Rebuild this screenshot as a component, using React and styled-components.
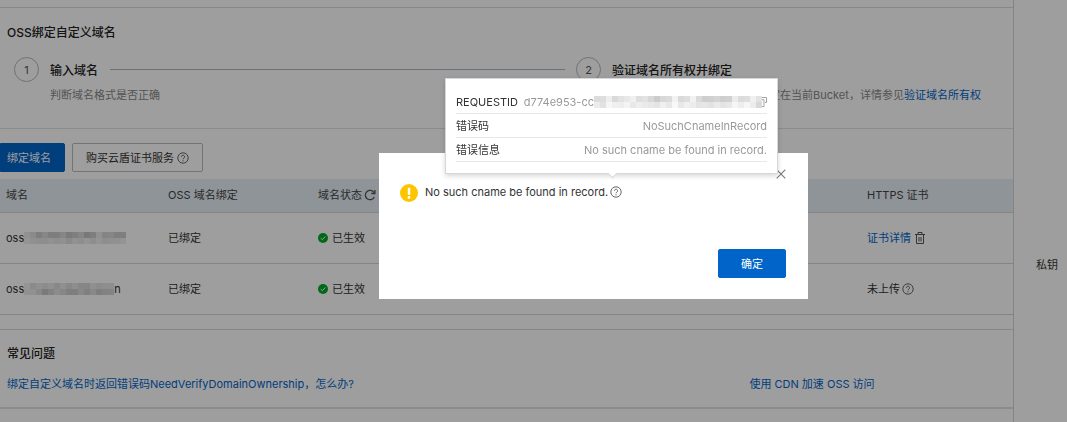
import styled, { createGlobalStyle } from "styled-components";

const GlobalStyle = createGlobalStyle`
  * {
    box-sizing: border-box;
  }

  body {
    margin: 0;
    background-color: #fff;
    color: #333;
    font-family: Inter, "Noto Sans CJK SC", sans-serif;
    font-size: 11px;
    line-height: 16px;
  }

  button {
    font: inherit;
    cursor: pointer;
  }

  a {
    color: #0064c8;
    text-decoration: none;
  }

  svg {
    display: block;
    flex: none;
  }
`;

const Page = styled.div`
  display: flex;
  min-height: 100vh;
`;

const Main = styled.main`
  flex: 1;
  min-width: 0;
  padding-top: 7px;
  border-right: 1px solid #d2d5d8;
`;

const Aside = styled.aside`
  width: 53px;
  padding: 257px 0 0 22px;
  white-space: nowrap;
`;

const Section = styled.section`
  border-top: 1px solid #d8dadc;
  border-bottom: ${({ $thick }) => ($thick ? "2px" : "1px")} solid #dfe1e3;

  h2 {
    margin: 0;
    font-size: 12px;
    line-height: 20px;
    font-weight: 500;
    color: #222;
  }
`;

const BindSection = styled(Section)`
  height: 122px;
  padding: 15px 0 0 7px;
`;

const Steps = styled.ol`
  display: grid;
  grid-template-columns: 562fr 437fr;
  margin: 14px 0 0;
  padding: 0 0 0 7px;
  list-style: none;
`;

const Step = styled.li`
  display: flex;
  gap: 11px;
  min-width: 0;
`;

const StepNumber = styled.span`
  flex: none;
  display: flex;
  align-items: center;
  justify-content: center;
  width: 25px;
  height: 25px;
  border: 1px solid #b4b9be;
  border-radius: 50%;
  color: #555;
`;

const StepBody = styled.div`
  flex: 1;
  min-width: 0;
  padding-top: 4px;
  white-space: nowrap;

  p {
    margin: 6px 0 0;
    color: #888;
  }
`;

const StepTitle = styled.div`
  display: flex;
  align-items: center;
  gap: 12px;
  height: 20px;
  font-size: 12px;
  font-weight: 500;
  color: #222;

  &::after {
    content: "";
    display: ${({ $last }) => ($last ? "none" : "block")};
    flex: 1;
    height: 1px;
    margin: 0 11px 4px 0;
    background-color: #aab6c4;
  }
`;

const Toolbar = styled.div`
  display: flex;
  gap: 7px;
  padding: 14px 0 7px;
`;

const Button = styled.button`
  display: flex;
  align-items: center;
  justify-content: center;
  gap: 3px;
  height: 29px;
  padding: 0 13px;
  border: 1px solid ${({ $primary }) => ($primary ? "#0064c8" : "#b8bcc0")};
  border-radius: 2px;
  background-color: ${({ $primary }) => ($primary ? "#0064c8" : "#fff")};
  color: ${({ $primary }) => ($primary ? "#fff" : "#333")};
  white-space: nowrap;
`;

const BindButton = styled(Button)`
  padding-left: 6px;
  border-radius: 0 2px 2px 0;
`;

const ConfirmButton = styled(Button)`
  width: 68px;
`;

const Table = styled.table`
  width: 100%;
  table-layout: fixed;
  border-collapse: collapse;

  th,
  td {
    padding: 0 0 0 6px;
    border-bottom: 1px solid #d2d5d8;
    text-align: left;
    font-weight: 400;
    white-space: nowrap;
  }

  th {
    height: 33px;
    background-color: #e6eff5;
    color: #444;
  }

  td {
    height: 51px;
  }
`;

const Col = styled.col`
  width: ${({ $width }) => $width};
`;

const Inline = styled.span`
  display: flex;
  align-items: center;
  gap: ${({ $gap }) => $gap || "4px"};
`;

const IconButton = styled.button`
  display: inline-flex;
  padding: 0;
  border: 0;
  background: none;
  color: #555;
`;

const MaskGrid = styled.span`
  display: inline-grid;
  grid-template-rows: 6px 6px;
  grid-auto-flow: column;
  grid-auto-columns: 6px;
`;

const MaskCell = styled.i`
  background-color: rgb(${({ $tone }) => `${$tone}, ${$tone}, ${$tone}`});
`;

const Faq = styled(Section)`
  height: 80px;
  margin-top: 14px;
  padding: 14px 0 0 7px;
`;

const FaqLinks = styled.div`
  display: grid;
  grid-template-columns: 738fr 262fr;
  margin-top: 12px;
  white-space: nowrap;
`;

const Overlay = styled.div`
  position: fixed;
  inset: 0;
  display: flex;
  justify-content: center;
  align-items: flex-start;
  padding: 153px 0 0 120px;
  background-color: rgba(0, 0, 0, 0.38);
`;

const Dialog = styled.div`
  position: relative;
  display: flex;
  flex-direction: column;
  width: 429px;
  min-height: 146px;
  padding: 31px 22px 21px 21px;
  background-color: #fff;
`;

const DialogMessage = styled.div`
  display: flex;
  align-items: flex-start;
  gap: 7px;
  flex: 1;
`;

const CloseButton = styled(IconButton)`
  position: absolute;
  top: 16px;
  right: 22px;
  color: #777;
`;

const DialogFooter = styled.div`
  display: flex;
  justify-content: flex-end;
`;

const Popover = styled.div`
  position: absolute;
  z-index: 1;
  bottom: calc(100% - 21px);
  left: 66px;
  width: 333px;
  padding: 11px 10px;
  border: 1px solid #d3d7de;
  background-color: #fff;
  box-shadow: 0 2px 5px rgba(0, 0, 0, 0.16);

  &::after {
    content: "";
    position: absolute;
    bottom: -4px;
    left: 50%;
    width: 6px;
    height: 6px;
    margin-left: -3px;
    border: solid #d3d7de;
    border-width: 0 1px 1px 0;
    background-color: #fff;
    transform: rotate(45deg);
  }
`;

const Details = styled.dl`
  margin: 0;
`;

const DetailRow = styled.div`
  display: flex;
  align-items: center;
  justify-content: space-between;
  height: 24px;
  border-bottom: 1px solid #e8e8e8;
  white-space: nowrap;

  dd {
    display: flex;
    align-items: center;
    margin: 0;
    color: #999;
  }
`;

const DOMAIN_MASK_1 = [
  [146, 148], [138, 146], [126, 142], [134, 142], [126, 146], [126, 142],
  [134, 146], [122, 138], [128, 146], [134, 142], [120, 148], [126, 142],
  [146, 148], [132, 142], [134, 144], [128, 146], [128, 148],
];

const DOMAIN_MASK_2 = [
  [148, 146], [138, 146], [144, 136], [140, 122], [144, 130], [136, 140],
  [144, 134], [136, 126], [142, 126], [134, 136], [134, 128], [144, 136],
  [140, 126], [142, 130], [142, 132],
];

const REQUEST_MASK = [
  [220, 236], [222, 226], [238, 246], [218, 240], [226, 238], [232, 244],
  [240, 232], [222, 238], [226, 234], [216, 232], [204, 228], [216, 240],
  [220, 232], [242, 248], [218, 232], [222, 240], [242, 236], [218, 228],
  [206, 230], [208, 226], [212, 234], [206, 228], [208, 232], [236, 246],
  [220, 238], [222, 246], [240, 236], [226, 216],
];

// the mask is drawn over a lighter page when it sits below the overlay
const Mask = ({ cells, dimmed }) => (
  <MaskGrid aria-hidden="true">
    {cells.flat().map((tone, i) => (
      <MaskCell key={i} $tone={dimmed ? Math.round(tone / 0.62) : tone} />
    ))}
  </MaskGrid>
);

const HelpIcon = () => (
  <svg width="12" height="12" viewBox="0 0 12 12" fill="none" stroke="#555">
    <circle cx="6" cy="6" r="5.2" strokeWidth="0.9" />
    <path d="M4.4 4.8a1.6 1.6 0 1 1 2.5 1.3c-.6.4-.9.6-.9 1.2" strokeWidth="0.9" />
    <circle cx="6" cy="8.8" r="0.6" fill="#555" stroke="none" />
  </svg>
);

const RefreshIcon = () => (
  <svg width="12" height="12" viewBox="0 0 12 12" fill="none" stroke="currentColor" strokeWidth="1.3">
    <path d="M10.3 8a4.7 4.7 0 1 1-.1-4.2" />
    <path d="M10.9.9v3.6H7.3" />
  </svg>
);

const CheckIcon = () => (
  <svg width="10" height="10" viewBox="0 0 10 10" fill="none">
    <circle cx="5" cy="5" r="5" fill="#00a825" />
    <path d="M2.7 5.1l1.6 1.6 3-3.2" stroke="#fff" />
  </svg>
);

const TrashIcon = () => (
  <svg width="10" height="12" viewBox="0 0 10 12" fill="none" stroke="currentColor">
    <path d="M0 2.5h10M3 2.3V.5h4v1.8M1.5 2.5v9h7v-9M4 5v4.5M6 5v4.5" />
  </svg>
);

const WarningIcon = () => (
  <svg width="18" height="18" viewBox="0 0 18 18">
    <circle cx="9" cy="9" r="9" fill="#fdc500" />
    <rect x="7.8" y="3.8" width="2.5" height="7.2" rx="1" fill="#fff" />
    <circle cx="9" cy="13.5" r="1.4" fill="#fff" />
  </svg>
);

const CloseIcon = () => (
  <svg width="10" height="10" viewBox="0 0 10 10" stroke="currentColor" strokeWidth="1.1">
    <path d="M.7.7l8.6 8.6M9.3.7L.7 9.3" />
  </svg>
);

const CopyIcon = () => (
  <svg width="5" height="10" viewBox="0 0 5 10" fill="none" stroke="#999" strokeWidth="0.9">
    <path d="M0 .5h4.5v5H3M0 2.7h2v6.8H0" />
  </svg>
);

const domains = [
  { id: 1, mask: DOMAIN_MASK_1, suffix: "", uploaded: true },
  { id: 2, mask: DOMAIN_MASK_2, suffix: "n", uploaded: false },
];

const DomainTable = () => (
  <Table>
    <colgroup>
      <Col $width="16%" />
      <Col $width="14.8%" />
      <Col $width="54.2%" />
      <Col $width="15%" />
    </colgroup>
    <thead>
      <tr>
        <th>域名</th>
        <th>OSS 域名绑定</th>
        <th>
          <Inline $gap="2px">
            域名状态
            <IconButton aria-label="刷新">
              <RefreshIcon />
            </IconButton>
          </Inline>
        </th>
        <th>HTTPS 证书</th>
      </tr>
    </thead>
    <tbody>
      {domains.map(({ id, mask, suffix, uploaded }) => (
        <tr key={id}>
          <td>
            <Inline $gap="0">
              oss
              <Mask cells={mask} dimmed />
              {suffix}
            </Inline>
          </td>
          <td>已绑定</td>
          <td>
            <Inline>
              <CheckIcon />
              已生效
            </Inline>
          </td>
          <td>
            {uploaded ? (
              <Inline>
                <a href="#cert">证书详情</a>
                <IconButton aria-label="删除">
                  <TrashIcon />
                </IconButton>
              </Inline>
            ) : (
              <Inline $gap="2px">
                未上传
                <HelpIcon />
              </Inline>
            )}
          </td>
        </tr>
      ))}
    </tbody>
  </Table>
);

const ErrorDetails = () => (
  <Popover role="tooltip" id="error-details">
    <Details>
      <DetailRow>
        <dt>REQUESTID</dt>
        <dd>
          d774e953-cc
          <Mask cells={REQUEST_MASK} />
          <IconButton aria-label="复制">
            <CopyIcon />
          </IconButton>
        </dd>
      </DetailRow>
      <DetailRow>
        <dt>错误码</dt>
        <dd>NoSuchCnameInRecord</dd>
      </DetailRow>
      <DetailRow>
        <dt>错误信息</dt>
        <dd>No such cname be found in record.</dd>
      </DetailRow>
    </Details>
  </Popover>
);

const ErrorDialog = () => (
  <Overlay>
    <Dialog role="alertdialog" aria-modal="true" aria-labelledby="error-message">
      <CloseButton aria-label="关闭">
        <CloseIcon />
      </CloseButton>
      <DialogMessage>
        <WarningIcon />
        <Inline $gap="2px">
          <span id="error-message">No such cname be found in record.</span>
          <IconButton aria-label="错误详情" aria-describedby="error-details">
            <HelpIcon />
          </IconButton>
        </Inline>
      </DialogMessage>
      <DialogFooter>
        <ConfirmButton $primary>确定</ConfirmButton>
      </DialogFooter>
      <ErrorDetails />
    </Dialog>
  </Overlay>
);

const App = () => {
  return (
    <>
      <GlobalStyle />
      <Page>
        <Main>
          <BindSection>
            <h2>OSS绑定自定义域名</h2>
            <Steps>
              <Step>
                <StepNumber>1</StepNumber>
                <StepBody>
                  <StepTitle>输入域名</StepTitle>
                  <p>判断域名格式是否正确</p>
                </StepBody>
              </Step>
              <Step>
                <StepNumber>2</StepNumber>
                <StepBody>
                  <StepTitle $last>验证域名所有权并绑定</StepTitle>
                  <p>
                    域名所有权验证通过后 将域名绑定在当前Bucket，详情参见
                    <a href="#verify">验证域名所有权</a>
                  </p>
                </StepBody>
              </Step>
            </Steps>
          </BindSection>

          <Toolbar>
            <BindButton $primary>绑定域名</BindButton>
            <Button>
              购买云盾证书服务
              <HelpIcon />
            </Button>
          </Toolbar>

          <DomainTable />

          <Faq $thick>
            <h2>常见问题</h2>
            <FaqLinks>
              <a href="#faq">
                绑定自定义域名时返回错误码NeedVerifyDomainOwnership，怎么办?
              </a>
              <a href="#cdn">使用 CDN 加速 OSS 访问</a>
            </FaqLinks>
          </Faq>
        </Main>
        <Aside>私钥</Aside>
      </Page>
      <ErrorDialog />
    </>
  );
};

export default App;
